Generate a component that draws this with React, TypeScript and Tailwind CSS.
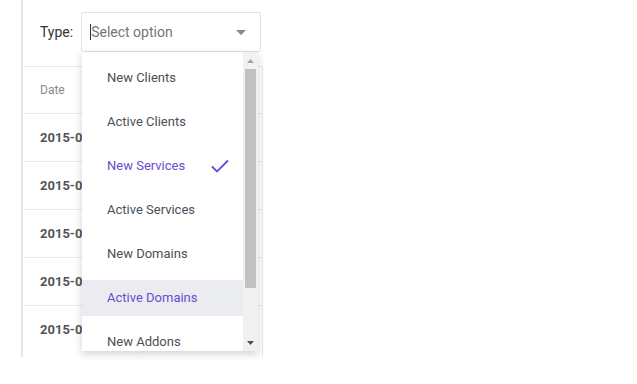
const options = [
  'New Clients',
  'Active Clients',
  'New Services',
  'Active Services',
  'New Domains',
  'Active Domains',
  'New Addons',
];

const rows = ['2015-01-05', '2015-01-04', '2015-01-03', '2015-01-02', '2015-01-01'];

export default function App() {
  return (
    <div className="relative w-[637px] h-[384px] bg-white overflow-hidden font-['Roboto','Liberation_Sans',sans-serif]">
      {/* card */}
      <div className="ml-[21px] w-[242px] h-[357px] border-l-2 border-[#e3e7ec] flex flex-col">
        {/* filter */}
        <div className="h-[66px] flex items-start pt-[12px] pl-[17px] gap-[8px]">
          <span className="h-[40px] leading-[40px] text-[14px] text-[#333]">Type:</span>
          <div className="w-[180px] h-[40px] border border-[#e2e2e2] rounded-[2px] flex items-center pl-[8px] pr-[14px]">
            <span className="w-px h-[16px] bg-[#333]" />
            <span className="flex-1 text-[14px] text-[#757575]">Select option</span>
            <svg width="10" height="5" viewBox="0 0 10 5">
              <path d="M0 0h10L5 5z" fill="#888" />
            </svg>
          </div>
        </div>

        {/* table */}
        <div className="flex-1 border-r border-[#e6e9ed] flex flex-col">
          <div className="h-[47px] border-t border-[#e6e9ed] flex">
            <div className="w-[120px] border-r border-[#e6e9ed] pl-[17px] flex items-center text-[12px] text-[#888]">Date</div>
            <div className="flex-1" />
          </div>
          {rows.map((r) => (
            <div key={r} className="h-[48px] border-t border-[#e6e9ed] flex">
              <div className="w-[120px] border-r border-[#e6e9ed] pl-[17px] flex items-center text-[13px] font-bold text-[#555]">{r}</div>
              <div className="flex-1" />
            </div>
          ))}
        </div>
      </div>

      {/* dropdown */}
      <div className="absolute left-[82px] top-[52px] w-[176px] h-[299px] bg-white shadow-[0_3px_8px_rgba(0,0,0,0.18)] flex">
        <div className="flex-1 overflow-hidden pt-[8px]">
          {options.map((o, i) => {
            const selected = i === 2;
            const hover = i === 5;
            return (
              <div
                key={o}
                className={`h-[36px] mb-[8px] pl-[25px] pr-[14px] flex items-center justify-between text-[13px] ${
                  selected || hover ? 'text-[#6c4bd1]' : 'text-[#4a4f57]'
                } ${hover ? 'bg-[#ebecf0]' : ''}`}
              >
                <span>{o}</span>
                {selected && (
                  <svg width="18" height="14" viewBox="0 0 18 14">
                    <path d="M1 7.5l5 5L17 1.5" fill="none" stroke="#6c4bd1" strokeWidth="1.8" />
                  </svg>
                )}
              </div>
            );
          })}
        </div>
        {/* scrollbar */}
        <div className="w-[15px] bg-[#f1f1f1] flex flex-col items-center">
          <div className="h-[17px] flex items-center justify-center">
            <svg width="7" height="4" viewBox="0 0 7 4">
              <path d="M0 4h7L3.5 0z" fill="#a3a3a3" />
            </svg>
          </div>
          <div className="w-[11px] h-[219px] bg-[#c1c1c1]" />
          <div className="flex-1" />
          <div className="h-[17px] flex items-center justify-center">
            <svg width="7" height="4" viewBox="0 0 7 4">
              <path d="M0 0h7L3.5 4z" fill="#505050" />
            </svg>
          </div>
        </div>
      </div>
    </div>
  );
}
